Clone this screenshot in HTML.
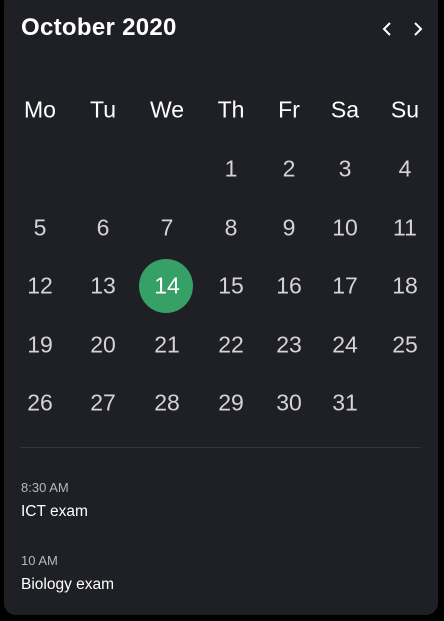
<!DOCTYPE html>
<html><head><style>
body{margin:0;width:444px;height:621px;background:#000;font-family:"Liberation Sans",sans-serif;position:relative;overflow:hidden}
.card{position:absolute;left:4px;top:-10px;width:434px;height:625px;background:#1f2025;border-radius:12px}
.t{position:absolute;white-space:nowrap;transform:translate(-50%,-50%);font-size:23px;color:#d4d4d6}
.h{color:#fff}
.circ{position:absolute;left:139px;top:259px;width:54px;height:54px;border-radius:50%;background:#36a066}
</style></head><body>
<div class="card"></div>
<div style="position:absolute;left:21px;top:14px;font-size:24px;font-weight:bold;color:#fff;letter-spacing:0.3px">October 2020</div>
<svg style="position:absolute;left:378px;top:20px" width="50" height="18"><path d="M12 3L6 9L12 15M37 3L43 9L37 15" stroke="#fff" stroke-width="2" fill="none"/></svg>
<div class="circ"></div>
<div id="g"></div>
<div style="position:absolute;left:20px;top:447px;width:401px;height:1px;background:#34363b"></div>
<div style="position:absolute;left:21px;top:480px;font-size:13px;color:#b8b8bb">8:30 AM</div>
<div style="position:absolute;left:21px;top:503px;font-size:15.5px;color:#fff">ICT exam</div>
<div style="position:absolute;left:21px;top:553px;font-size:13px;color:#b8b8bb">10 AM</div>
<div style="position:absolute;left:21px;top:576px;font-size:15.5px;color:#fff">Biology exam</div>
<script>
var xs=[40,103,167,231,289,345,405],ys=[110,169,228,286,345,403],d=["Mo","Tu","We","Th","Fr","Sa","Su"],h="";
d.forEach((s,i)=>h+=`<div class="t h" style="left:${xs[i]}px;top:${ys[0]}px">${s}</div>`);
for(var n=1;n<=31;n++){var p=n+2,c=p%7,r=Math.floor(p/7)+1;h+=`<div class="t${n==14?' h':''}" style="left:${xs[c]}px;top:${ys[r]}px">${n}</div>`;}
document.getElementById("g").innerHTML=h;
</script>
</body></html>
